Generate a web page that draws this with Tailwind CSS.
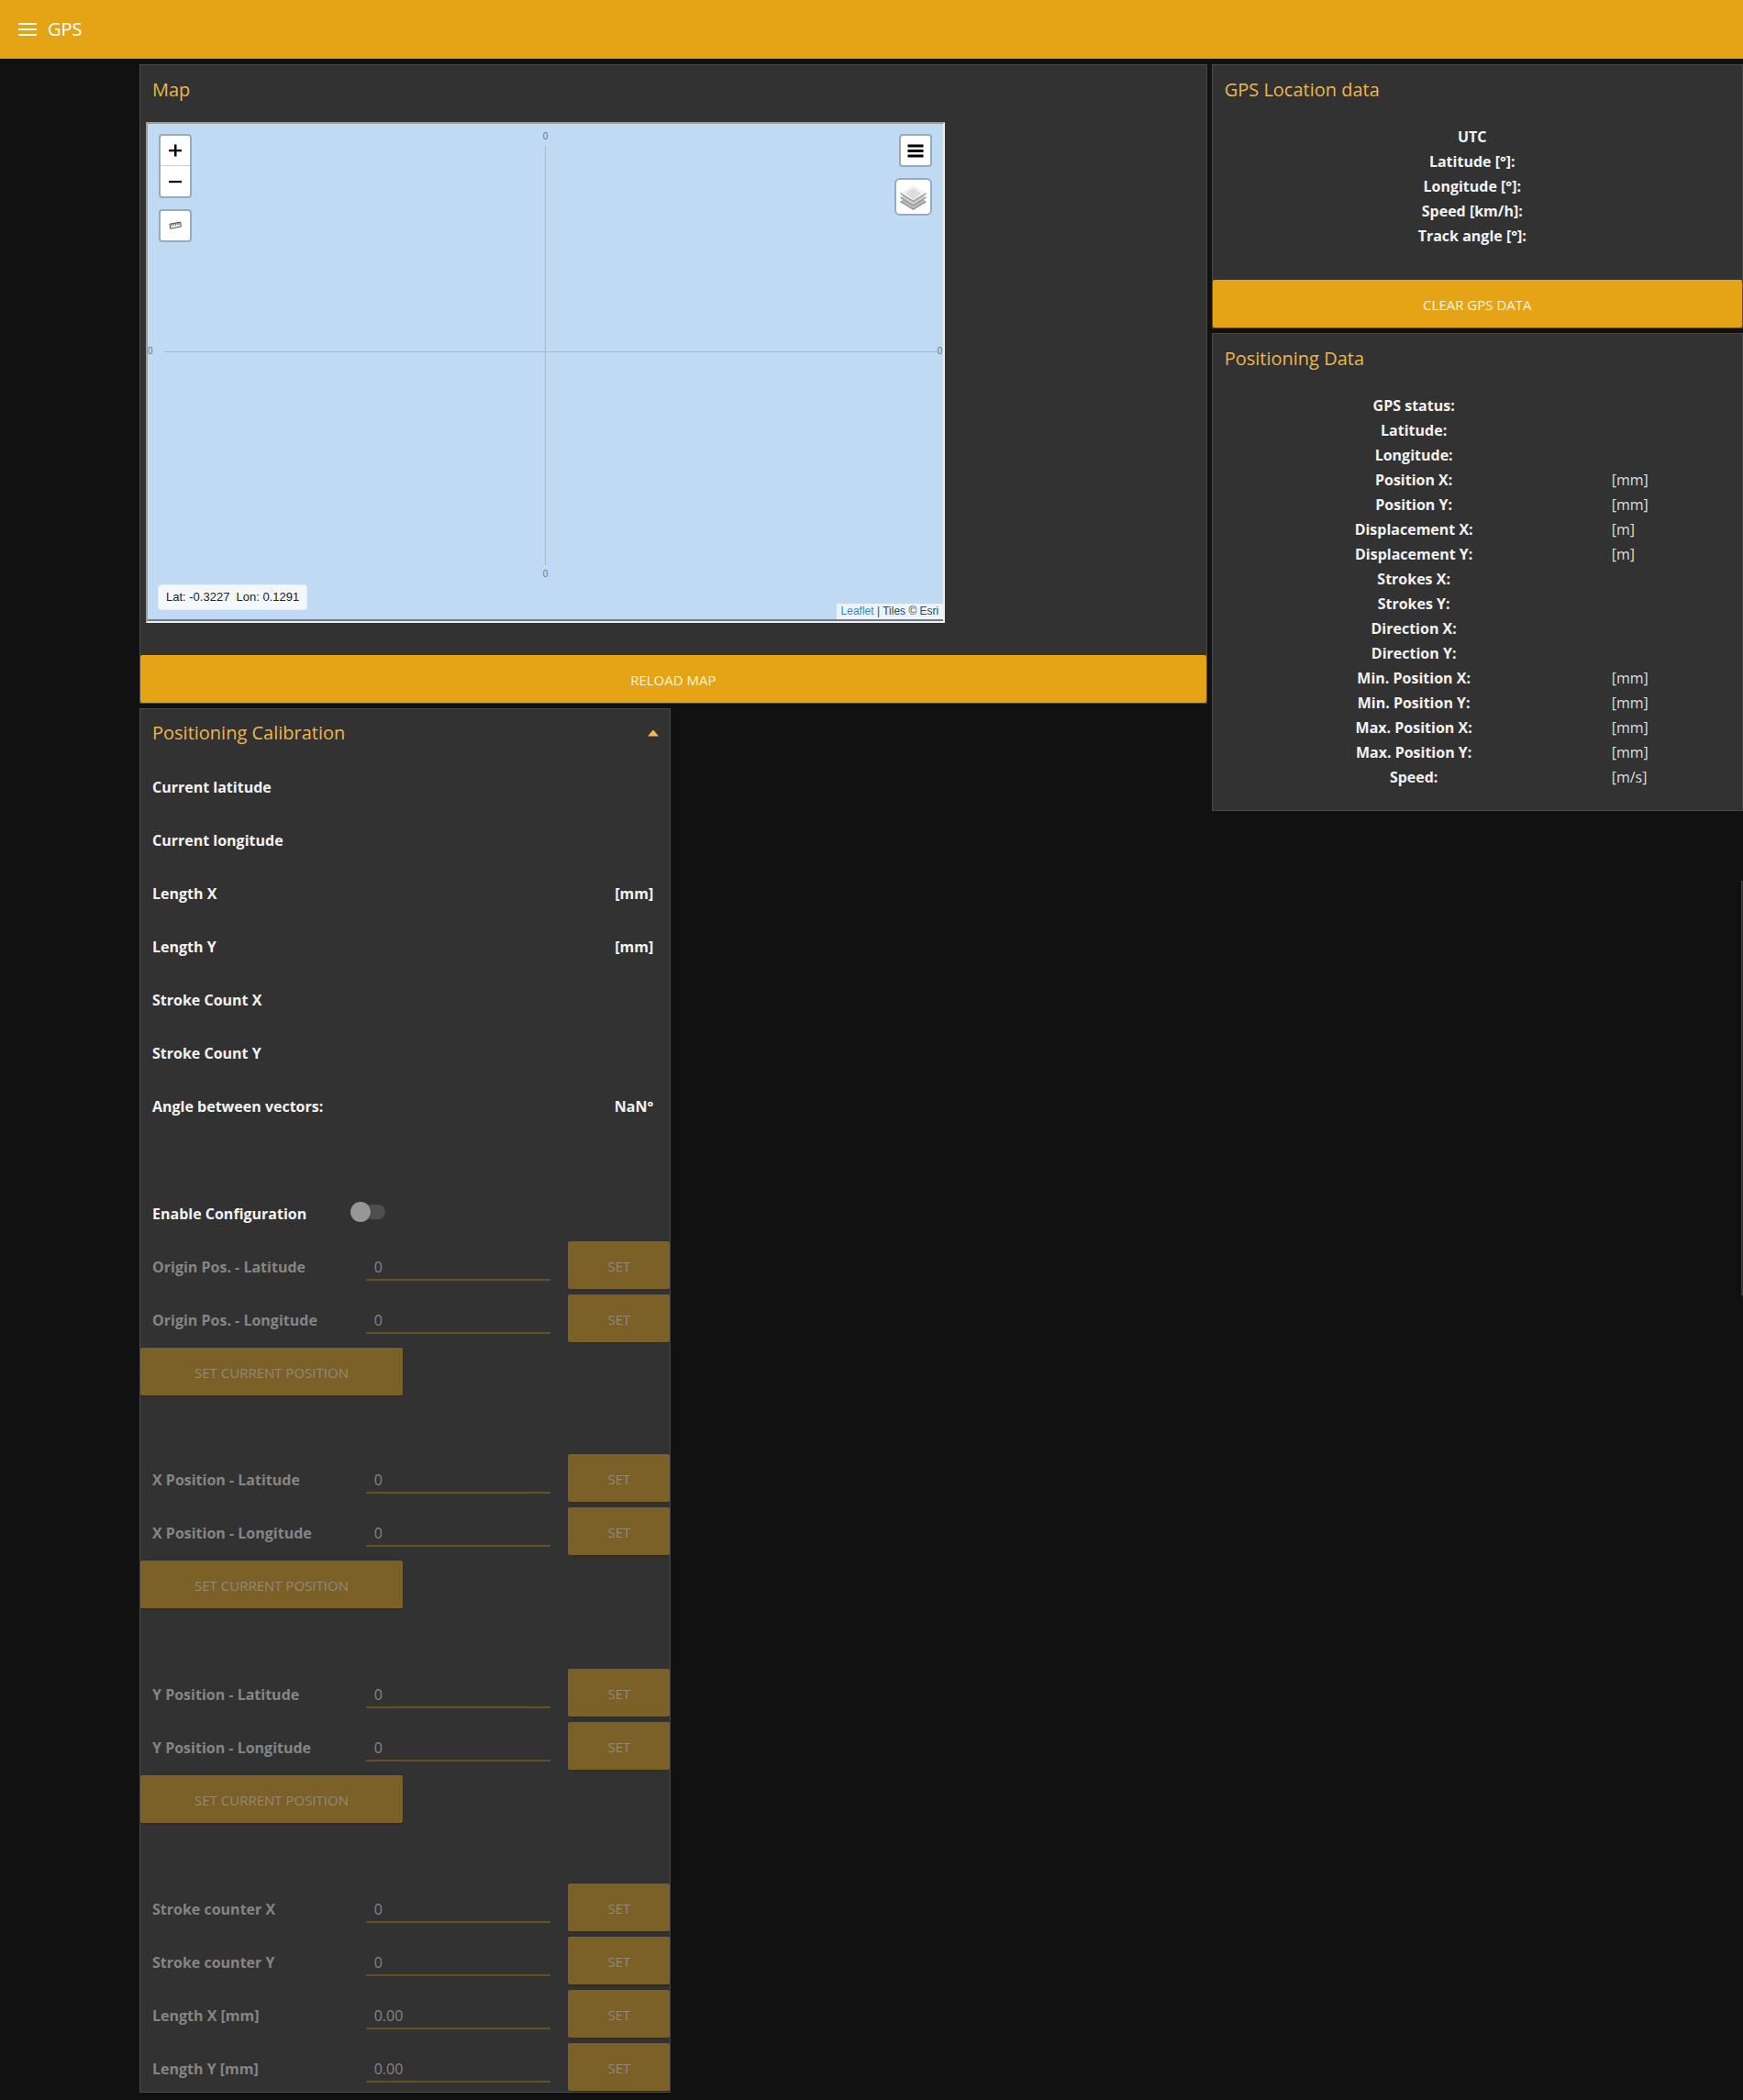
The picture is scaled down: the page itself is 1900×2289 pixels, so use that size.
<!DOCTYPE html>
<html lang="en">
<head>
  <meta charset="UTF-8">
  <meta name="viewport" content="width=device-width, initial-scale=1.0">
  <title>GPS</title>
  <script src="https://cdn.jsdelivr.net/npm/@tailwindcss/browser@4"></script>
  <script>
    const positioning = [
      ['GPS status:', ''],
      ['Latitude:', ''],
      ['Longitude:', ''],
      ['Position X:', '[mm]'],
      ['Position Y:', '[mm]'],
      ['Displacement X:', '[m]'],
      ['Displacement Y:', '[m]'],
      ['Strokes X:', ''],
      ['Strokes Y:', ''],
      ['Direction X:', ''],
      ['Direction Y:', ''],
      ['Min. Position X:', '[mm]'],
      ['Min. Position Y:', '[mm]'],
      ['Max. Position X:', '[mm]'],
      ['Max. Position Y:', '[mm]'],
      ['Speed:', '[m/s]']
    ];

    const gpsLocation = ['UTC', 'Latitude [°]:', 'Longitude [°]:', 'Speed [km/h]:', 'Track angle [°]:'];

    const current = [
      ['Current latitude', ''],
      ['Current longitude', ''],
      ['Length X', '[mm]'],
      ['Length Y', '[mm]'],
      ['Stroke Count X', ''],
      ['Stroke Count Y', ''],
      ['Angle between vectors:', 'NaN°']
    ];

    const fields = {
      origin: [['Origin Pos. - Latitude', '0'], ['Origin Pos. - Longitude', '0']],
      xpos: [['X Position - Latitude', '0'], ['X Position - Longitude', '0']],
      ypos: [['Y Position - Latitude', '0'], ['Y Position - Longitude', '0']],
      counters: [['Stroke counter X', '0'], ['Stroke counter Y', '0'], ['Length X [mm]', '0.00'], ['Length Y [mm]', '0.00']]
    };

    document.addEventListener('DOMContentLoaded', () => {
      document.getElementById('location').innerHTML = gpsLocation.map(label => `
        <tr class="h-[27px]"><th class="w-[98%] font-bold">${label}</th><td></td></tr>
      `).join('');

      document.getElementById('positioning').innerHTML = positioning.map(([label, unit]) => `
        <tr class="h-[27px]"><th class="w-3/4 font-bold">${label}</th><td class="pl-2 text-[#dedede]">${unit}</td></tr>
      `).join('');

      document.getElementById('current').innerHTML = current.map(([label, value]) => `
        <div class="flex h-13 items-center justify-between pt-0.5 pl-[13px] pr-[18px]">
          <span>${label}</span><span>${value}</span>
        </div>
      `).join('');

      Object.entries(fields).forEach(([name, rows]) => {
        document.getElementById(name).innerHTML = rows.map(([label, value], i) => `
          <div class="grid h-13 grid-cols-[246fr_202fr_130fr] items-center">
            <label for="${name}${i}" class="pt-1 pl-[13px] text-[#858585]">${label}</label>
            <input id="${name}${i}" type="text" value="${value}" disabled
              class="mt-0.5 h-8 w-full border-b-2 border-[#655024] pt-1 pl-[9px] font-normal text-[#858585]">
            <button type="button" disabled
              class="ml-[19px] h-13 rounded-xs bg-[#7b6027] pt-0.5 text-[15px] font-normal text-[#928a76] shadow">SET</button>
          </div>
        `).join('');
      });
    });
  </script>
</head>
<body class="relative min-h-screen bg-[#111111] font-['Open_Sans','Noto_Sans',sans-serif] text-base leading-[27px] text-[#f2f2f2]">

  <header class="flex h-16 items-center gap-3 bg-[#e5a316] pl-5">
    <button type="button" aria-label="Menu">
      <svg class="h-4 w-5" viewBox="0 0 20 16" fill="#fff">
        <path d="M0 1h20v2H0zM0 7h20v2H0zM0 13h20v2H0z"/>
      </svg>
    </button>
    <h1 class="text-xl text-white">GPS</h1>
  </header>

  <main class="ml-[8%] grid grid-cols-3 items-start gap-[5px] pt-1.5 pb-1.5">

    <div class="col-span-2 grid grid-cols-2 items-start gap-[5px]">

      <!-- Map -->
      <section class="col-span-2 border border-[#4a4a4a] bg-[#323232]">
        <h2 class="h-[62px] pt-[13px] pl-[13px] text-xl text-[#ecb74b]">Map</h2>
        <div class="ml-1.5 w-3/4 border-2 border-t-[#9a9a9a] border-r-[#eeeeee] border-b-[#eeeeee] border-l-[#9a9a9a]">
          <div class="relative h-[542px] border-b-2 border-[#76797c] bg-[#bfdaf2] font-['Liberation_Sans',sans-serif]">

            <!-- graticule -->
            <div class="absolute inset-y-0 left-1/2 flex w-3 -translate-x-1/2 flex-col items-center pt-2 pb-[43px] text-[10px] leading-3 text-[#6a757e]">
              <span>0</span>
              <span class="my-1 w-px flex-1 bg-[#a9b8c5]"></span>
              <span>0</span>
            </div>
            <div class="absolute inset-x-0 top-[242px] flex items-center text-[10px] leading-3 text-[#6a757e]">
              <span>0</span>
              <span class="ml-3 h-px flex-1 bg-[#a9b8c5]"></span>
              <span class="mr-px">0</span>
            </div>

            <div class="absolute top-[11px] left-3 flex flex-col gap-3">
              <div class="flex w-9 flex-col rounded border-2 border-[#94abc0] bg-white">
                <button type="button" aria-label="Zoom in" class="flex h-[33px] items-center justify-center border-b border-[#cccccc]">
                  <svg class="size-[14px]" viewBox="0 0 14 14" fill="#000"><path d="M6 0.500h2.500v5.500H14v2.200H8.500v5.300H6V8.200H0V6h6z"/></svg>
                </button>
                <button type="button" aria-label="Zoom out" class="flex h-[33px] items-center justify-center">
                  <svg class="size-[14px]" viewBox="0 0 14 14" fill="#000"><path d="M0 6h14v2.200H0z"/></svg>
                </button>
              </div>
              <button type="button" aria-label="Measure" class="flex size-9 items-center justify-center rounded border-2 border-[#94abc0] bg-white">
                <svg class="size-[14px]" viewBox="0 0 14 14" fill="none" stroke="#444">
                  <path stroke-width="1" d="M1 5.200 12.800 3.200 13.300 7.900 1.700 10.200z"/>
                  <path stroke-width="0.900" d="M3.200 5v2.800M5.200 4.600v2.200M7.200 4.300v2.800M9.200 4v2.200M11 3.700v2.600"/>
                </svg>
              </button>
            </div>

            <div class="absolute top-[11px] right-3 flex flex-col items-end gap-3">
              <button type="button" aria-label="Map menu" class="flex size-9 items-center justify-center rounded border-2 border-[#94abc0] bg-white">
                <svg class="h-4 w-[18px]" viewBox="0 0 18 16" fill="#000">
                  <path d="M0.500 1.500h17v3h-17zM0.500 7h17v3h-17zM0.500 12.500h17v3h-17z"/>
                </svg>
              </button>
              <button type="button" aria-label="Layers" class="flex size-[41px] items-center justify-center rounded-md border-2 border-[#94abc0] bg-white">
                <svg class="h-7 w-[29px]" viewBox="0 0 29 28">
                  <path fill="#b9b9b9" d="M0.500 18.500 14.500 9.500l14 9-14 9z"/>
                  <path fill="none" stroke="#8e8e8e" stroke-width="1.200" d="M0.500 18.800 14.500 27.200l14-8.400"/>
                  <path fill="#cdcdcd" d="M0.500 14 14.500 5l14 9-14 9z"/>
                  <path fill="none" stroke="#8e8e8e" stroke-width="1.200" d="M0.500 14.300 14.500 22.900l14-8.600"/>
                  <path fill="#f1f1f1" stroke="#fff" stroke-width="0.500" d="M0.500 9.500 14.500 0.600l14 8.900-14 9z"/>
                  <path fill="#dddddd" d="M6 9.500 14.500 4.500 23 9.500l-8.500 7.200z"/>
                  <path fill="none" stroke="#8e8e8e" stroke-width="1.200" d="M0.500 9.700 14.500 18.500l14-8.800"/>
                </svg>
              </button>
            </div>

            <div class="absolute bottom-2.5 left-[11px] h-7 rounded border border-[#e2eefa] bg-[#f3f8fd] px-2 text-[13px] leading-[26px] whitespace-pre text-[#222222]">Lat: -0.3227  Lon: 0.1291</div>
            <div class="absolute right-0 bottom-0 h-[17px] bg-[#ebf3fb] px-[5px] text-xs leading-[17px] text-[#444444]">
              <a href="#" class="text-[#2a8fbd]">Leaflet</a> | Tiles © Esri
            </div>
          </div>
        </div>
        <button type="button" class="mt-[35px] block h-13 w-full rounded-xs bg-[#e5a316] pt-0.5 text-[15px] text-[#fdf3de]">RELOAD MAP</button>
      </section>

      <!-- Positioning calibration -->
      <section class="border border-[#4a4a4a] bg-[#323232] pb-px font-bold">
        <div class="flex h-[58px] items-center justify-between pb-1.5 pl-[13px] pr-3">
          <h2 class="text-xl font-normal text-[#ecb74b]">Positioning Calibration</h2>
          <button type="button" aria-label="Collapse">
            <svg class="h-2 w-3" viewBox="0 0 12 8" fill="#f2bb50"><path d="M0 7.500 6 0.500l6 7z"/></svg>
          </button>
        </div>

        <div id="current" class="flex flex-col gap-1.5"></div>

        <div class="mt-16 flex h-13 items-center">
          <label for="enable" class="w-[229px] pt-1 pl-[13px]">Enable Configuration</label>
          <span class="relative flex h-[22px] w-[38px] items-center">
            <input id="enable" type="checkbox" class="peer ml-1 h-4 w-[34px] appearance-none rounded-full bg-[#4f4f4f]">
            <span class="pointer-events-none absolute left-0 size-[22px] rounded-full bg-[#979797] shadow peer-checked:left-4"></span>
          </span>
        </div>

        <div id="origin" class="mt-1.5 flex flex-col gap-1.5"></div>
        <button type="button" disabled class="mt-1.5 block h-13 w-[286px] rounded-xs bg-[#7b6027] pt-0.5 text-[15px] font-normal text-[#928a76] shadow">SET CURRENT POSITION</button>

        <div id="xpos" class="mt-16 flex flex-col gap-1.5"></div>
        <button type="button" disabled class="mt-1.5 block h-13 w-[286px] rounded-xs bg-[#7b6027] pt-0.5 text-[15px] font-normal text-[#928a76] shadow">SET CURRENT POSITION</button>

        <div id="ypos" class="mt-[66px] flex flex-col gap-1.5"></div>
        <button type="button" disabled class="mt-1.5 block h-13 w-[286px] rounded-xs bg-[#7b6027] pt-0.5 text-[15px] font-normal text-[#928a76] shadow">SET CURRENT POSITION</button>

        <div id="counters" class="mt-[66px] flex flex-col gap-1.5"></div>
      </section>
    </div>

    <div class="flex flex-col gap-[5px]">
      <section class="border border-[#4a4a4a] bg-[#323232]">
        <h2 class="h-[65px] pt-[13px] pl-[13px] text-xl text-[#ecb74b]">GPS Location data</h2>
        <div class="px-3">
          <table class="w-full"><tbody id="location"></tbody></table>
        </div>
        <button type="button" class="mt-[34px] block h-13 w-full rounded-xs bg-[#e5a316] pt-0.5 text-[15px] text-[#fdf3de]">CLEAR GPS DATA</button>
      </section>

      <section class="border border-[#4a4a4a] bg-[#323232] pb-[22px]">
        <h2 class="h-[65px] pt-[13px] pl-[13px] text-xl text-[#ecb74b]">Positioning Data</h2>
        <div class="px-3">
          <table class="w-full"><tbody id="positioning"></tbody></table>
        </div>
      </section>
    </div>
  </main>

  <!-- scroll thumb -->
  <div class="absolute top-[960px] right-0 h-[452px] w-0.5 bg-[#3c3c3c]"></div>
</body>
</html>
